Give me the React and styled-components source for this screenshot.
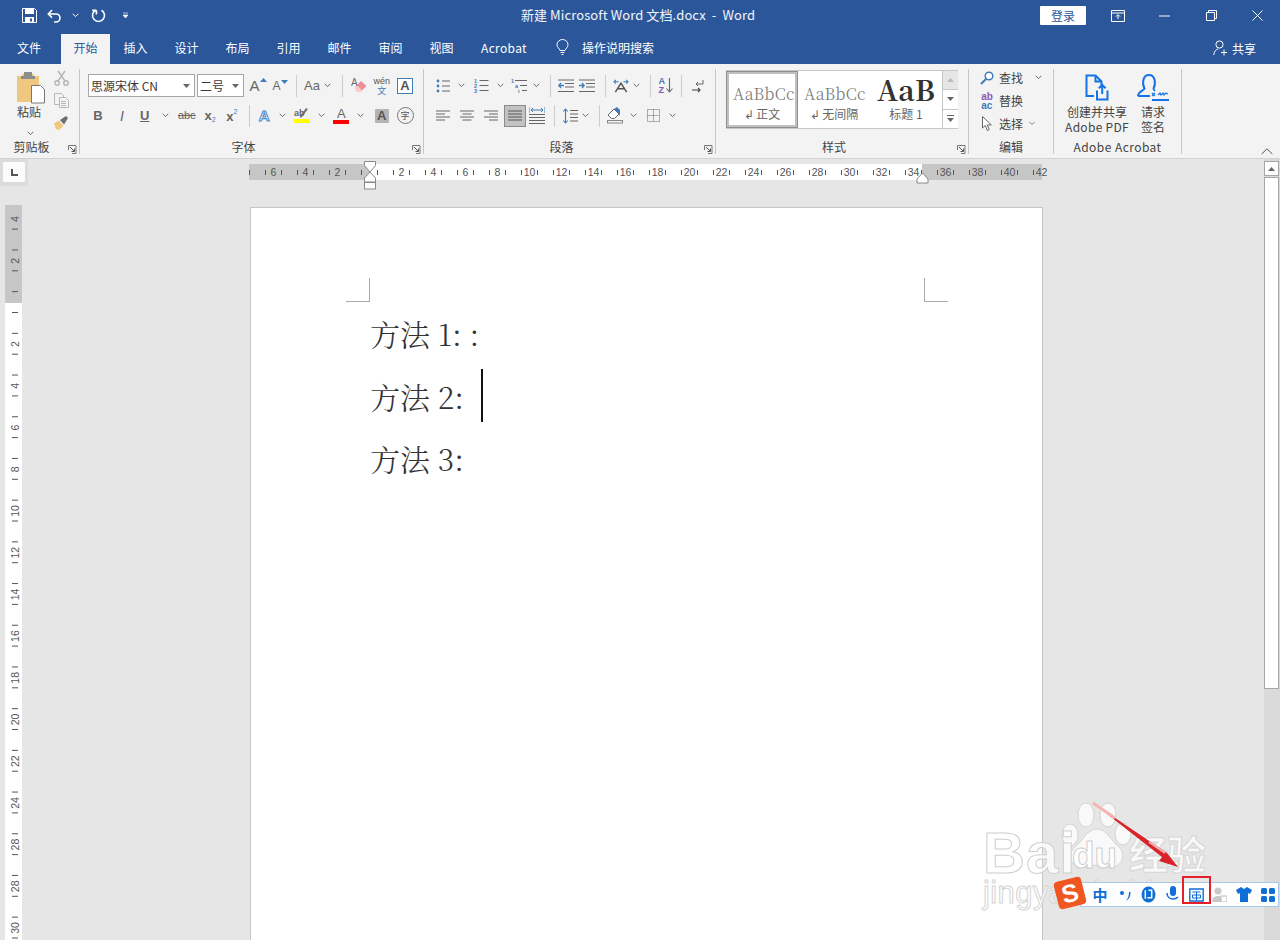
import React from 'react';
import styled, { createGlobalStyle } from 'styled-components';

const UI = '"Noto Sans CJK SC", "Noto Sans", sans-serif';
const SERIF = '"Noto Serif CJK SC", "Source Han Serif SC", "Liberation Serif", "Noto Sans CJK SC", serif';
const BLUE = '#2b579a';
const GR = '#666';
const IB = '#3f7cb8';

const Global = createGlobalStyle`
  html, body { margin: 0; padding: 0; background: #e6e6e6; overflow: hidden; }
  #root { width: 1280px; height: 940px; }
`;

const Shell = styled.div`
  position: relative; width: 1280px; height: 940px; overflow: hidden;
  display: flex; flex-direction: column;
  font: 12px ${UI}; color: #444;
`;
const TitleBar = styled.header`
  height: 34px; background: ${BLUE}; color: #fff; flex: none; box-sizing: border-box; padding-bottom: 3px;
  display: grid; grid-template-columns: 1fr auto 1fr; align-items: center;
`;
const TitleText = styled.div`font-size: 13px; white-space: pre; color: #f2f5fa; margin: 0 0 2px -4px; letter-spacing: .1px;`;
const TitleRight = styled.div`display: flex; justify-content: flex-end; align-items: center;`;
const SignIn = styled.button`
  width: 46px; height: 19px; padding: 0; border: 0; border-radius: 1px; background: #fff;
  color: ${BLUE}; font: 12px ${UI}; margin-right: 12px;
`;
const Slot = styled.span`
  display: flex; align-items: center; justify-content: center; flex: none;
  width: ${p => p.$w}px; height: 100%; margin-left: ${p => p.$ml || 0}px;
`;
const RowWrap = styled.div`display: flex; height: ${p => p.$h || 23}px; align-items: center;`;

function Row({ start, items, h }) {
  return (
    <RowWrap $h={h}>
      {items.map(([c, el], i) => {
        const next = items[i + 1];
        const prev = items[i - 1];
        const hwR = next ? (next[0] - c) / 2 : (c - prev[0]) / 2;
        const hwL = prev ? (c - prev[0]) / 2 : hwR;
        return <Slot key={i} $w={hwL + hwR} $ml={prev ? 0 : c - hwL - start}>{el}</Slot>;
      })}
    </RowWrap>
  );
}

const TabBar = styled.nav`
  height: 30px; background: ${BLUE}; display: flex; align-items: stretch; flex: none;
  padding-left: 5px; color: #fff;
`;
const Tab = styled.div`
  width: ${p => p.$w}px; margin-left: ${p => p.$ml || 0}px; box-sizing: border-box; padding-bottom: 3px;
  display: flex; align-items: center; justify-content: center; font-size: 12px;
  letter-spacing: ${p => p.$ls || 0}px;
  background: ${p => (p.$active ? '#f3f3f3' : 'transparent')};
  color: ${p => (p.$active ? BLUE : '#fff')};
`;
const SearchHint = styled.div`display: flex; align-items: center; gap: 13px; margin-left: 15px; font-size: 12px; padding-bottom: 3px;`;
const Share = styled.div`display: flex; align-items: center; gap: 4px; margin-left: auto; margin-right: 24px; font-size: 12px; padding-bottom: 2px;`;

const Ribbon = styled.section`
  height: 95px; flex: none; background: #f3f3f3; border-bottom: 1px solid #d2d2d2;
  box-sizing: border-box; display: flex; padding-top: 5px;
`;
const Group = styled.div`
  width: ${p => p.$w}px; height: 85px; box-sizing: border-box; flex: none;
  border-right: 1px solid #c6c6c6; display: flex; flex-direction: column;
`;
const GroupBody = styled.div`
  flex: 1; min-height: 0; display: flex;
  flex-direction: ${p => (p.$col ? 'column' : 'row')};
  gap: ${p => p.$gap || 0}px; padding: ${p => p.$pad || '5px 0 0 8px'};
`;
const GroupFoot = styled.div`display: flex; height: 17px; align-items: flex-end; flex: none;`;
const GroupName = styled.div`flex: 1; text-align: center; color: #444; font-size: 12px; line-height: 14px; letter-spacing: ${p => p.$ls || 0}px;`;
const Launcher = styled.span`width: 16px; display: flex; justify-content: flex-start; padding-left: 5px; box-sizing: border-box; flex: none;`;

const PasteCol = styled.div`width: 34px; margin-left: 4px; display: flex; flex-direction: column; align-items: center; padding-top: 2px;`;
const PasteIcoBox = styled.span`display: block; height: 32px; margin-left: 3px;`;
const PasteLabel = styled.div`font-size: 12px; line-height: 16px; margin-top: 0;`;
const PasteCaret = styled.span`display: block; margin: 2px 0 0 3px;`;
const SmallCol = styled.div`width: 24px; margin-left: 3px; display: flex; flex-direction: column; align-items: center; gap: 7px; padding-top: 0;`;

const FontRow = styled.div`display: flex; height: 23px; margin-bottom: 7px;`;
const SelectBox = styled.div`
  width: ${p => p.$w}px; margin-right: ${p => p.$mr || 0}px; height: 23px; box-sizing: border-box;
  background: #fff; border: 1px solid #a6a6a6; display: flex; align-items: center;
  justify-content: space-between; padding: 0 4px 0 2px; font-size: 12px; color: #3a3a3a; flex: none;
`;
const ParaStack = styled.div`display: flex; flex-direction: column; gap: 7px;`;
const Sep = styled.i`display: block; width: 1px; height: 22px; background: #cdcdcd; flex: none;`;
const Glyph = styled.span`
  font-family: "Liberation Sans", sans-serif; line-height: 1; white-space: nowrap;
  font-size: ${p => p.$s || 13}px; font-weight: ${p => p.$b ? 700 : 400}; font-style: ${p => p.$i ? 'italic' : 'normal'};
  color: ${p => p.$c || GR}; text-decoration: ${p => p.$d || 'none'};
`;
const Sub = styled.sub`font-size: 7px; color: ${IB}; font-weight: 400; vertical-align: -2px;`;
const Sup = styled.sup`font-size: 7px; color: ${IB}; font-weight: 400; vertical-align: 7px;`;
const GrowWrap = styled.span`display: flex; align-items: flex-start; gap: 0;`;
const UnderBar = styled.span`
  display: inline-flex; flex-direction: column; align-items: center; line-height: 1;
`;
const ColorLine = styled.i`display: block; width: 16px; height: 4px; background: ${p => p.$c}; margin-top: 0;`;
const BoxA = styled.span`
  width: 14px; height: 14px; border: 1px solid ${IB}; display: flex; align-items: center; justify-content: center;
  font: 700 13px "Liberation Sans", sans-serif; color: #555; background: #fff;
`;
const GreyA = styled.span`
  width: 14px; height: 14px; background: #b4b4b4; display: flex; align-items: center; justify-content: center;
  font: 700 13px "Liberation Sans", sans-serif; color: #555;
`;
const Circled = styled.span`
  width: 15px; height: 15px; border: 1px solid #777; border-radius: 50%; display: flex; align-items: center; justify-content: center;
  font-size: 9px; color: #555; line-height: 1;
`;
const WenWrap = styled.span`display: flex; flex-direction: column; align-items: center; line-height: 8px;`;
const Wen = styled.span`font: 9px "Liberation Sans", sans-serif; color: #555; line-height: 9px;`;
const WenZh = styled.span`font-size: 9px; color: ${IB}; line-height: 9px;`;
const Active = styled.span`
  width: 22px; height: 22px; background: #c2c2c2; border: 1px solid #8a8a8a; box-sizing: border-box;
  display: flex; align-items: center; justify-content: center;
`;
const SortStack = styled.span`display: flex; align-items: center; gap: 1px;`;
const SortLetters = styled.span`display: flex; flex-direction: column; font: 700 9px "Liberation Sans", sans-serif; line-height: 9px;`;
const LetterA = styled.span`color: ${IB};`;
const LetterZ = styled.span`color: #8a5ab0;`;

const Gallery = styled.div`
  margin: 1px 0 0 10px; width: 232px; height: 59px; box-sizing: border-box; display: flex;
  background: #fff; border: 1px solid #c6c6c6; border-left: 0;
`;
const StyleCard = styled.div`
  width: ${p => p.$w}px; flex: none; box-sizing: border-box; overflow: hidden;
  display: flex; flex-direction: column; align-items: center;
  padding-top: ${p => (p.$sel ? 0 : 3)}px;
  border: ${p => (p.$sel ? '3px solid #c0c0c0' : '0')};
  outline: ${p => (p.$sel ? '1px solid #8f8f8f' : '0')}; outline-offset: -1px;
`;
const StyleSample = styled.div`
  height: 31px; width: 100%; overflow: hidden; white-space: nowrap; color: ${p => (p.$big ? '#333' : '#777')};
  font-family: ${SERIF}; box-sizing: border-box; padding: ${p => (p.$big ? 0 : 4)}px 0 0 ${p => p.$pl || 4}px;
  font-size: ${p => (p.$big ? 28 : 16)}px; letter-spacing: ${p => (p.$big ? 0.5 : 0.3)}px; font-weight: ${p => (p.$big ? 700 : 300)};
  line-height: 31px;
`;
const StyleCaption = styled.div`font-size: 12px; color: #666; line-height: 18px; white-space: nowrap;`;
const GalleryScroll = styled.div`
  width: 15px; flex: none; display: flex; flex-direction: column; border-left: 1px solid #c6c6c6; margin-left: auto;
`;
const ScrollCell = styled.div`
  flex: 1; display: flex; align-items: center; justify-content: center;
  background: ${p => (p.$off ? '#e6e6e6' : '#fff')};
  border-bottom: ${p => (p.$last ? 0 : '1px solid #c6c6c6')};
`;
const EditRow = styled.div`display: flex; align-items: center; height: 23px; flex: none; margin-top: ${p => (p.$first ? -3 : 0)}px;`;
const EditIcon = styled.span`width: 30px; display: flex; justify-content: center; padding-left: 6px; box-sizing: border-box;`;
const EditText = styled.span`font-size: 12px; color: #444; width: 30px;`;
const AbStack = styled.span`display: flex; flex-direction: column; font: 700 10px "Liberation Sans", sans-serif; line-height: 9px;`;
const Ab = styled.span`color: #8a5ab0;`;
const Ac = styled.span`color: ${IB};`;
const AdobeWrap = styled.div`display: flex; padding-top: 2px;`;
const AdobeBtn = styled.div`
  width: ${p => p.$w}px; flex: none; display: flex; flex-direction: column; align-items: center;
  font-size: 12px; line-height: 15px; color: #444; text-align: center;
`;
const AdobeIco = styled.span`height: 33px; display: flex; align-items: center;`;
const AdobeLatin = styled.span`letter-spacing: .3px; white-space: nowrap;`;
const Collapse = styled.span`margin-left: auto; margin-right: 7px; align-self: flex-end;`;

const Work = styled.main`flex: 1; min-height: 0; display: flex; background: #e6e6e6; overflow: hidden;`;
const LeftCol = styled.div`width: 28px; flex: none; display: flex; flex-direction: column;`;
const Corner = styled.div`
  width: 28px; height: 27px; box-sizing: border-box; background: #dcdcdc; padding: 3px 3px 4px 3px;
`;
const CornerInner = styled.div`width: 22px; height: 20px; background: #fbfbfb; display: flex; align-items: center; justify-content: center;`;
const VRuler = styled.svg`display: block; margin: 19px 0 0 5px; flex: none; overflow: visible;`;
const Center = styled.div`flex: 1; min-width: 0; display: flex; flex-direction: column;`;
const HRuler = styled.svg`display: block; margin: 1px 0 0 221px; flex: none; overflow: visible;`;
const Page = styled.article`
  width: 793px; flex: 1; box-sizing: border-box; background: #fff; margin: 17px 0 0 222px;
  border: 1px solid #c6c6c6; border-bottom: 0; color: #333;
`;
const CropRow = styled.div`display: flex; justify-content: space-between; margin: 70px 94px 0 95px;`;
const Crop = styled.i`
  display: block; width: 23px; height: 23px; border-bottom: 1px solid #aaa;
  ${p => (p.$right ? 'border-left: 1px solid #aaa;' : 'border-right: 1px solid #aaa;')}
`;
const Body = styled.div`padding: 0 0 0 119px;`;
const Line = styled.p`
  margin: 0; height: 62.5px; display: flex; align-items: center; white-space: pre;
  font: 30px ${SERIF}; font-weight: 300; color: #333;
`;
const Caret = styled.i`display: block; width: 1.5px; height: 53px; background: #111; margin-left: 17px;`;
const ScrollCol = styled.aside`
  width: 16px; flex: none; background: #dadada; display: flex; flex-direction: column; padding-top: 2px;
`;
const ScrollUp = styled.div`
  width: 15px; height: 15px; box-sizing: border-box; background: #fff; border: 1px solid #a6a6a6;
  display: flex; align-items: center; justify-content: center;
`;
const ScrollThumb = styled.div`width: 15px; height: 512px; margin-top: 1px; box-sizing: border-box; background: #fff; border: 1px solid #a6a6a6;`;

const Mark = styled.div`
  position: absolute; left: 983px; top: 828px; width: 230px; height: 90px; pointer-events: none;
`;
const MarkBai = styled.div`
  position: absolute; left: 0; top: -9px; font: 700 58px "Liberation Sans", sans-serif; letter-spacing: 1px;
  color: rgba(255,255,255,.75); -webkit-text-stroke: 1px #cfcfcf;
`;
const MarkDu = styled.div`
  position: absolute; left: 89px; top: 7px; font: 700 37px "Liberation Sans", sans-serif;
  color: #fff; -webkit-text-stroke: 1px #cfcfcf;
`;
const MarkZh = styled.div`
  position: absolute; left: 146px; top: -1px; font: 700 39px ${UI}; line-height: 50px;
  color: rgba(255,255,255,.8); -webkit-text-stroke: 1px #d6d6d6; letter-spacing: -1px; white-space: nowrap;
`;
const MarkUrl = styled.div`
  position: absolute; left: 0; top: 47px; font: 31px "Liberation Sans", sans-serif; white-space: nowrap;
  color: rgba(255,255,255,.75); -webkit-text-stroke: 1px #d4d4d4; letter-spacing: .4px;
`;
const Paw = styled.svg`position: absolute; left: 75px; top: -27px;`;
const ArrowSvg = styled.svg`position: absolute; left: 1085px; top: 798px; pointer-events: none;`;
const Ime = styled.div`
  position: absolute; left: 1080px; top: 882px; width: 199px; height: 25px; box-sizing: border-box;
  background: rgba(255,255,255,.96); border: 1px solid #a9c8e8;
`;
const ImeLogo = styled.div`
  position: absolute; left: 1056px; top: 879px; width: 28px; height: 28px; border-radius: 4px;
  background: #f0561f; transform: rotate(-14deg); display: flex; align-items: center; justify-content: center;
  color: #fff; font: 700 25px "Liberation Sans", sans-serif;
`;
const ImeZh = styled.span`font-size: 15px; font-weight: 700; color: #0f6fd6; line-height: 1;`;
const RedBox = styled.div`
  position: absolute; left: 1182px; top: 876px; width: 29px; height: 28px; box-sizing: border-box; border: 2px solid #e6202a;
  pointer-events: none;
`;

const Dn = ({ c = '#6a6a6a' }) => (
  <svg width="7" height="5" viewBox="0 0 7 5"><path d="M.7.8 3.5 3.6 6.3.8" fill="none" stroke={c} /></svg>
);
const Tri = ({ c = '#666' }) => (
  <svg width="7" height="4" viewBox="0 0 7 4"><path d="M0 0h7L3.5 4z" fill={c} /></svg>
);
const Save = () => (
  <svg width="15" height="15" viewBox="0 0 15 15"><path d="M.5.5h12l2 2v12H.5z" fill="none" stroke="#fff" /><rect x="3" y="1" width="9" height="5" fill="#fff" /><rect x="3" y="9" width="9" height="5" fill="#fff" /><rect x="8" y="10.5" width="2" height="3" fill={BLUE} /></svg>
);
const Undo = () => (
  <svg width="15" height="14" viewBox="0 0 15 14"><path d="M5 1 1.3 5 5 8.6M1.6 5H9a4 4 0 0 1 4 4 4 4 0 0 1-4 4H7" fill="none" stroke="#fff" strokeWidth="1.6" /></svg>
);
const Redo = () => (
  <svg width="15" height="15" viewBox="0 0 15 15"><path d="M4.5 2.3a6 6 0 1 0 6 0M5.4 2.3H1.2M5.4 2.3V6.6" fill="none" stroke="#fff" strokeWidth="1.6" /></svg>
);
const Custom = () => (
  <svg width="7" height="7" viewBox="0 0 7 7"><path d="M1 1h5M1 3h5L3.5 6z" fill="#fff" stroke="#fff" strokeWidth=".6" /></svg>
);
const DisplayOpt = () => (
  <svg width="14" height="12" viewBox="0 0 14 12"><path d="M.5.5h13v11H.5zM.5 3h13" fill="none" stroke="#fff" /><path d="M7 9V5M5 6.6 7 4.6l2 2" fill="none" stroke="#fff" /></svg>
);
const Minim = () => <svg width="11" height="2" viewBox="0 0 11 2"><path d="M0 1h11" stroke="#fff" /></svg>;
const Restore = () => (
  <svg width="11" height="11" viewBox="0 0 11 11"><path d="M.5 2.5h8v8h-8zM2.5 2.5v-2h8v8h-2" fill="none" stroke="#fff" /></svg>
);
const Close = () => <svg width="11" height="11" viewBox="0 0 11 11"><path d="m.5.5 10 10M10.5.5l-10 10" stroke="#fff" /></svg>;
const Bulb = () => (
  <svg width="13" height="17" viewBox="0 0 13 17"><path d="M4 11.5C3.5 9.5 1 8.5 1 5.7a5.5 5.2 0 0 1 11 0c0 2.8-2.5 3.8-3 5.8zM4.5 13.5h4M5.5 15.5h2" fill="none" stroke="#fff" /></svg>
);
const SharePerson = () => (
  <svg width="15" height="16" viewBox="0 0 15 16"><circle cx="6.5" cy="4.5" r="3.6" fill="none" stroke="#fff" /><path d="M.7 15c.3-3.500 2.300-5.500 4.600-6.200M11 9.500v6M8 12.500h6" fill="none" stroke="#fff" /></svg>
);
const PasteIco = () => (
  <svg width="30" height="32" viewBox="0 0 30 32"><path d="M1 4h5V2h12v2h5v26H1z" fill="#efc77f" /><rect x="8" y="0" width="8" height="5" fill="#8d8d8d" /><rect x="5" y="4" width="14" height="3" fill="#8d8d8d" /><path d="M15.5 13.5h9l4 4v13.5h-13z" fill="#fff" stroke="#777" /></svg>
);
const Scissors = () => (
  <svg width="15" height="16" viewBox="0 0 15 16"><g fill="none" stroke="#b4b4b4" strokeWidth="1.4"><circle cx="3" cy="13" r="2.2" /><circle cx="12" cy="13" r="2.2" /><path d="M4 11 11 1M11 11 4 1" /></g></svg>
);
const Copy = () => (
  <svg width="15" height="15" viewBox="0 0 15 15"><g fill="#f3f3f3" stroke="#b8b8b8"><path d="M.5.5h7l2 2v9h-9z" /><path d="M5.5 4.5h6l3 3v7h-9z" /><path d="M7 8.5h5M7 10.5h5M7 12.5h5" /></g></svg>
);
const Brush = () => (
  <svg width="16" height="15" viewBox="0 0 16 15"><path d="m1 8.5 5-3 4.5 5.5-4 3.5H3z" fill="#efc77f" /><path d="m7 5 6-4 2 2-4 6.5z" fill="#6e6e6e" /></svg>
);
const LaunchIco = () => (
  <svg width="9" height="9" viewBox="0 0 9 9"><path d="M.5 5V.5H8v8H4" fill="none" stroke="#777" /><path d="M2 2l4.2 4.2M6.5 3.5v3h-3" fill="none" stroke="#555" /></svg>
);
const Eraser = () => (
  <svg width="17" height="17" viewBox="0 0 17 17"><path d="m4 10 6-6 5.5 5-6 6H6z" fill="#ef8f9b" /><path d="M4 10 6 15h3.5l1.5-1.5L6 8z" fill="#f8cdd2" /><text x="0" y="9" fontFamily="Liberation Sans" fontSize="10" fill="#6a6a6a">A</text></svg>
);
const Pen = () => (
  <svg width="16" height="11" viewBox="0 0 16 11"><path d="m6 10 2-1 6-8-2-1-6 8z" fill="#777" /><text x="0" y="8" fontFamily="Liberation Sans" fontSize="9" fontWeight="700" fill="#666">ab</text></svg>
);
const OutlineA = () => (
  <svg width="18" height="18" viewBox="0 0 18 18"><text x="2" y="15" fontFamily="Liberation Sans" fontSize="17" fontWeight="700" fill="#fff" stroke="#4c8ccb" strokeWidth="1.2">A</text></svg>
);
const Dots = ({ y, c = IB }) => <circle cx="2" cy={y} r="1.4" fill={c} />;
const Bullets = () => (
  <svg width="14" height="14" viewBox="0 0 14 14"><Dots y={2} /><Dots y={7} /><Dots y={12} /><path d="M6 2h8M6 7h8M6 12h8" stroke="#666" /></svg>
);
const Numbered = () => (
  <svg width="15" height="15" viewBox="0 0 15 15"><g fontFamily="Liberation Sans" fontSize="5.5" fontWeight="700" fill={IB}><text x="0" y="4.5">1</text><text x="0" y="9.5">2</text><text x="0" y="14.5">3</text></g><path d="M5.5 2.5h9M5.5 7.5h9M5.5 12.5h9" stroke="#666" /></svg>
);
const Multi = () => (
  <svg width="16" height="15" viewBox="0 0 16 15"><g fontFamily="Liberation Sans" fontSize="5.5" fontWeight="700" fill={IB}><text x="0" y="4.5">1</text><text x="4" y="9.5">a</text><text x="7" y="14.5">i</text></g><path d="M4 2.5h12M9 7.5h7M11 12.5h5" stroke="#666" /></svg>
);
const IndentIco = ({ flip }) => (
  <svg width="16" height="14" viewBox="0 0 16 14"><path d="M0 1h16M7 4.5h9M7 8h9M0 12.5h16" stroke="#666" /><path d={flip ? 'M6 6.5H1M3 4 .8 6.5 3 9' : 'M0 6.5h5M3 4l2.2 2.5L3 9'} fill="none" stroke={IB} strokeWidth="1.3" /></svg>
);
const TextDir = () => (
  <svg width="17" height="14" viewBox="0 0 17 14"><path d="M2.5 13.5 8.5 4l6 9.500M5 10h7" fill="none" stroke="#555" strokeWidth="1.6" /><path d="M6 2.500H1M3 .5 1 2.500l2 2M11 2.500h5M14 .5l2 2-2 2" fill="none" stroke={IB} strokeWidth="1.100" /></svg>
);
const SortArrow = () => (
  <svg width="7" height="15" viewBox="0 0 7 15"><path d="M3.500 0v14M.5 10.500l3 3.500 3-3.500" fill="none" stroke="#666" strokeWidth="1.100" /></svg>
);
const Pilcrow = () => (
  <svg width="12" height="14" viewBox="0 0 12 14"><path d="M11 1v4H4M6 3 4 5l2 2" fill="none" stroke="#666" /><path d="M0 11h8M6 9l2 2-2 2" fill="none" stroke="#444" strokeWidth="1.100" /></svg>
);
const Align = ({ a, c = '#666' }) => {
  const mk = (w, y) => {
    const x = a === 'l' ? 0 : a === 'r' ? 14 - w : (14 - w) / 2;
    return <path key={y} d={`M${x} ${y}h${w}`} stroke={c} />;
  };
  return <svg width="14" height="11" viewBox="0 0 14 11">{mk(14, 1)}{mk(9, 4)}{mk(14, 7)}{mk(9, 10)}</svg>;
};
const Justify = () => (
  <svg width="14" height="11" viewBox="0 0 14 11"><path d="M0 1h14M0 4h14M0 7h14M0 10h14" stroke="#555" /></svg>
);
const Distrib = () => (
  <svg width="16" height="17" viewBox="0 0 16 17"><path d="M0 0v6M16 0v6" stroke={IB} /><path d="M2 3h12M4 1 2 3l2 2M12 1l2 2-2 2" fill="none" stroke={IB} /><path d="M0 7.500h16M0 10.500h16M0 13.500h16M0 16.500h16" stroke="#666" /></svg>
);
const LineSp = () => (
  <svg width="15" height="16" viewBox="0 0 15 16"><path d="M2.500 1v14M.3 3.500 2.500 1l2.200 2.500M.3 12.500l2.200 2.500 2.200-2.500" fill="none" stroke={IB} strokeWidth="1.100" /><path d="M7 2.500h8M7 6h8M7 9.500h8M7 13h8" stroke="#666" /></svg>
);
const Bucket = () => (
  <svg width="17" height="17" viewBox="0 0 17 17"><path d="m1 8 6-6 5 5-4.500 4.500h-3z" fill="#fff" stroke="#666" /><path d="m7 2 5 5 1 2V3l-3-3z" fill={IB} /><rect x=".5" y="13.500" width="15" height="2.500" fill="#f3f3f3" stroke="#888" /></svg>
);
const Borders = () => (
  <svg width="13" height="13" viewBox="0 0 13 13"><path d="M.5.5h12v12H.5zM.5 6.500h12M6.500.5v12" fill="none" stroke="#666" strokeDasharray="1 1" /></svg>
);
const ScrollTri = ({ up, c = '#666' }) => (
  <svg width="7" height="4" viewBox="0 0 7 4"><path d={up ? 'M0 4h7L3.500 0z' : 'M0 0h7L3.500 4z'} fill={c} /></svg>
);
const MoreTri = () => (
  <svg width="7" height="7" viewBox="0 0 7 7"><path d="M0 .5h7" stroke="#666" /><path d="M0 3h7L3.500 7z" fill="#666" /></svg>
);
const Mag = () => (
  <svg width="14" height="14" viewBox="0 0 14 14"><circle cx="9" cy="5" r="3.800" fill="#fff" stroke={IB} strokeWidth="1.500" /><path d="M6 8 1 13" stroke={IB} strokeWidth="2" /></svg>
);
const Cursor = () => (
  <svg width="10" height="15" viewBox="0 0 10 15"><path d="M.5.5v11.500l2.800-2.500 2 5 2-.800-2-4.800h4z" fill="#fff" stroke="#666" /></svg>
);
const PdfShare = () => (
  <svg width="24" height="28" viewBox="0 0 24 28"><path d="M9 22H1.500V1.500h9l6 6v4" fill="none" stroke="#1473e6" strokeWidth="2" /><path d="M10.500 1.500v6h6" fill="none" stroke="#1473e6" strokeWidth="2" /><path d="M12 16.500v9h10.500v-9M17.200 20V11M13.800 14.300l3.400-3.400 3.400 3.400" fill="none" stroke="#1473e6" strokeWidth="2" /></svg>
);
const Sign = () => (
  <svg width="32" height="28" viewBox="0 0 32 28"><path d="M1 22c0-4 5-5 6.500-7.500C5 10 5.500 1 12 1s7 9 4.500 13.500c.4 1 .8 2 1.500 2.500M1 22h12" fill="none" stroke="#1473e6" strokeWidth="2" /><path d="M15 19l3 3M18 19l-3 3M21 21l2-2 1 2 2-2 1 2 2-2 2 1" fill="none" stroke="#1473e6" strokeWidth="1.300" /><path d="M15 26h17" stroke="#1473e6" strokeWidth="2" /></svg>
);
const ChevUp = () => (
  <svg width="12" height="7" viewBox="0 0 12 7"><path d="M.7 6 6 .8 11.300 6" fill="none" stroke="#555" /></svg>
);
const TabStop = () => (
  <svg width="7" height="7" viewBox="0 0 7 7"><path d="M1 0v6h6" fill="none" stroke="#555" strokeWidth="2" /></svg>
);
const ImeDot = () => (
  <svg width="12" height="14" viewBox="0 0 12 14"><circle cx="3" cy="5" r="2" fill="#0f6fd6" /><path d="M10 4c0 4-1 6-3 9 3-2 4.500-4 4.500-9z" fill="#0f6fd6" /></svg>
);
const ImeFace = () => (
  <svg width="15" height="17" viewBox="0 0 14 16"><path d="M7 .5a6.500 7.500 0 1 0 .01 0z" fill="#0f6fd6" /><path d="M7 4h3v7H6M4 4v8" stroke="#fff" strokeWidth="1.400" fill="none" /></svg>
);
const ImeMic = () => (
  <svg width="14" height="17" viewBox="0 0 14 17"><rect x="4" y="0" width="6" height="10" rx="3" fill="#0f6fd6" /><path d="M1 7c0 4 3 6 6 6 3 0 4-1 5-2" fill="none" stroke="#0f6fd6" strokeWidth="1.500" /></svg>
);
const ImeKey = () => (
  <svg width="15" height="14" viewBox="0 0 15 14"><path d="M.8 1h13.400v12H.8z" fill="none" stroke="#0f6fd6" strokeWidth="1.400" /><path d="M3.500 4h8M7.500 4v8M3.500 7h8v3h-8z" fill="none" stroke="#0f6fd6" /></svg>
);
const ImeUser = () => (
  <svg width="15" height="15" viewBox="0 0 15 15"><circle cx="6" cy="4" r="3.500" fill="#c9c9c9" /><path d="M0 15c0-4 2.500-6 6-6s6 2 6 6z" fill="#c9c9c9" /><rect x="9" y="9" width="6" height="6" fill="#fff" stroke="#bbb" /></svg>
);
const ImeShirt = () => (
  <svg width="16" height="15" viewBox="0 0 16 15"><path d="M5 0 0 3l2 4 2-1v9h8V6l2 1 2-4-5-3-3 2z" fill="#0f6fd6" /></svg>
);
const ImeGrid = () => (
  <svg width="14" height="14" viewBox="0 0 14 14"><g fill="#0f6fd6"><rect width="6" height="6" rx="1.500" /><rect x="8" width="6" height="6" rx="1.500" /><rect y="8" width="6" height="6" rx="1.500" /><rect x="8" y="8" width="6" height="6" rx="1.500" /></g></svg>
);

const hTicks = [];
for (let x = 120 - 8 - 16 * 7; x <= 793; x += 16) hTicks.push(x);
const hLabels = [];
for (let k = -3; k <= 21; k++) if (k !== 0) hLabels.push(k);

const vLabels = [[-2, '4'], [-1, '2'], [1, '2'], [2, '4'], [3, '6'], [4, '8'], [5, '10'], [6, '12'], [7, '14'], [8, '16'], [9, '18'], [10, '20'], [11, '22'], [12, '24'], [13, '28'], [14, '28'], [15, '30']];
const vTicks = [];
for (let i = -4; i < 32; i++) vTicks.push(107 + 20.85 * i);

const HorizontalRuler = () => (
  <HRuler width="793" height="30" viewBox="0 0 793 30">
    <rect x="0" y="4" width="793" height="16" fill="#fff" />
    <rect x="0" y="4" width="120" height="16" fill="#c6c6c6" />
    <rect x="673" y="4" width="120" height="16" fill="#c6c6c6" />
    {hTicks.map(x => <rect key={x} x={x} y="10" width="1" height="5" fill="#555" />)}
    {hLabels.map(k => (
      <text key={k} x={120.5 + 32 * k} y="16" textAnchor="middle" fontFamily="Liberation Sans" fontSize="10.500" fill="#555">{Math.abs(2 * k)}</text>
    ))}
    <g fill="#fff" stroke="#8a8a8a">
      <path d="M115.500 1.500h11v4l-5.500 6.500-5.500-6.500z" />
      <path d="M121 12l5.500 6v4h-11v-4z" />
      <rect x="115.500" y="22.500" width="11" height="6.500" />
      <path d="M673.500 13l5.500 6v4h-11v-4z" />
    </g>
  </HRuler>
);
const VerticalRuler = () => (
  <VRuler width="17" height="735" viewBox="0 0 17 735">
    <rect width="17" height="735" fill="#fff" />
    <rect width="17" height="98" fill="#c6c6c6" />
    {vTicks.map(y => <rect key={y} x="7" y={y} width="6" height="1" fill="#555" />)}
    {vLabels.map(([k, t]) => {
      const y = 97.500 + 41.700 * k;
      return <text key={k} x="0" y="0" transform={`translate(14 ${y}) rotate(-90)`} textAnchor="middle" fontFamily="Liberation Sans" fontSize="10.500" fill="#555">{t}</text>;
    })}
  </VRuler>
);

const font2 = [
  [98, <Glyph $b>B</Glyph>],
  [122, <Glyph $i $s={14}>I</Glyph>],
  [146, <Glyph $b $d="underline">U</Glyph>],
  [165, <Dn />],
  [186, <Glyph $s={11} $d="line-through">abc</Glyph>],
  [210, <Glyph $b>x<Sub>2</Sub></Glyph>],
  [234, <Glyph $b>x<Sup>2</Sup></Glyph>],
  [249, <Sep />],
  [265, <OutlineA />],
  [281, <Dn />],
  [303, <UnderBar><Pen /><ColorLine $c="#ffff00" /></UnderBar>],
  [321, <Dn />],
  [342, <UnderBar><Glyph $s={13}>A</Glyph><ColorLine $c="#ff0000" /></UnderBar>],
  [360, <Dn />],
  [381, <GreyA>A</GreyA>],
  [405, <Circled>字</Circled>],
];
const font1 = [
  [258, <GrowWrap><Glyph $s={15}>A</Glyph><ScrollTri up c={IB} /></GrowWrap>],
  [283, <GrowWrap><Glyph $s={12}>A</Glyph><ScrollTri c={IB} /></GrowWrap>],
  [296, <Sep />],
  [312, <Glyph $s={13}>Aa</Glyph>],
  [328, <Dn />],
  [341, <Sep />],
  [358, <Eraser />],
  [382, <WenWrap><Wen>wén</Wen><WenZh>文</WenZh></WenWrap>],
  [405, <BoxA>A</BoxA>],
];
const para1 = [
  [443, <Bullets />], [461, <Dn />], [482, <Numbered />], [500, <Dn />], [520, <Multi />], [537, <Dn />],
  [550, <Sep />], [563, <IndentIco flip />], [589, <IndentIco />], [605, <Sep />],
  [621, <TextDir />], [637, <Dn />], [650, <Sep />],
  [666, <SortStack><SortLetters><LetterA>A</LetterA><LetterZ>Z</LetterZ></SortLetters><SortArrow /></SortStack>],
  [681, <Sep />], [698, <Pilcrow />],
];
const para2 = [
  [443, <Align a="l" />], [467, <Align a="c" />], [491, <Align a="r" />], [515, <Active><Justify /></Active>],
  [539, <Distrib />], [554, <Sep />], [570, <LineSp />], [586, <Dn />], [599, <Sep />],
  [615, <Bucket />], [633, <Dn />], [654, <Borders />], [672, <Dn />],
];
const imeItems = [
  [1100, <ImeZh>中</ImeZh>], [1125, <ImeDot />], [1149, <ImeFace />], [1172, <ImeMic />], [1197, <ImeKey />],
  [1219, <ImeUser />], [1244, <ImeShirt />], [1268, <ImeGrid />],
];
const tabs = ['插入', '设计', '布局', '引用', '邮件', '审阅', '视图'];

export default function App() {
  return (
    <Shell>
      <Global />
      <TitleBar>
        <Row start={0} h={31} items={[[29, <Save />], [57, <Undo />], [75, <Dn c="#fff" />], [96, <Redo />], [125, <Custom />]]} />
        <TitleText>新建 Microsoft Word 文档.docx  -  Word</TitleText>
        <TitleRight>
          <SignIn>登录</SignIn>
          <Row start={1098} h={31} items={[[1118, <DisplayOpt />], [1165, <Minim />], [1211, <Restore />], [1257, <Close />]]} />
        </TitleRight>
      </TitleBar>
      <TabBar>
        <Tab $w={48}>文件</Tab>
        <Tab $w={49} $ml={8} $active>开始</Tab>
        {tabs.map(t => <Tab key={t} $w={51}>{t}</Tab>)}
        <Tab $w={74} $ls={0.35}>Acrobat</Tab>
        <SearchHint><Bulb />操作说明搜索</SearchHint>
        <Share><SharePerson />共享</Share>
      </TabBar>
      <Ribbon>
        <Group $w={80}>
          <GroupBody $pad="1px 0 0 8px">
            <PasteCol>
              <PasteIcoBox><PasteIco /></PasteIcoBox>
              <PasteLabel>粘贴</PasteLabel>
              <PasteCaret><Dn /></PasteCaret>
            </PasteCol>
            <SmallCol><Scissors /><Copy /><Brush /></SmallCol>
          </GroupBody>
          <GroupFoot><GroupName>剪贴板</GroupName><Launcher><LaunchIco /></Launcher></GroupFoot>
        </Group>
        <Group $w={344}>
          <GroupBody $col>
            <FontRow>
              <SelectBox $w={107} $mr={2}>思源宋体 CN<Tri /></SelectBox>
              <SelectBox $w={47}>二号<Tri /></SelectBox>
              <Row start={244} items={font1} />
            </FontRow>
            <Row start={88} items={font2} />
          </GroupBody>
          <GroupFoot><GroupName>字体</GroupName><Launcher><LaunchIco /></Launcher></GroupFoot>
        </Group>
        <Group $w={292}>
          <GroupBody>
            <ParaStack>
              <Row start={432} items={para1} />
              <Row start={432} items={para2} />
            </ParaStack>
          </GroupBody>
          <GroupFoot><GroupName>段落</GroupName><Launcher><LaunchIco /></Launcher></GroupFoot>
        </Group>
        <Group $w={253}>
          <GroupBody $pad="0">
            <Gallery>
              <StyleCard $w={72} $sel>
                <StyleSample>AaBbCc</StyleSample>
                <StyleCaption>↲ 正文</StyleCaption>
              </StyleCard>
              <StyleCard $w={72}>
                <StyleSample $pl={6}>AaBbCc</StyleSample>
                <StyleCaption>↲ 无间隔</StyleCaption>
              </StyleCard>
              <StyleCard $w={72}>
                <StyleSample $big $pl={7}>AaB</StyleSample>
                <StyleCaption>标题 1</StyleCaption>
              </StyleCard>
              <GalleryScroll>
                <ScrollCell $off><ScrollTri up c="#bbb" /></ScrollCell>
                <ScrollCell><ScrollTri /></ScrollCell>
                <ScrollCell $last><MoreTri /></ScrollCell>
              </GalleryScroll>
            </Gallery>
          </GroupBody>
          <GroupFoot><GroupName>样式</GroupName><Launcher><LaunchIco /></Launcher></GroupFoot>
        </Group>
        <Group $w={85}>
          <GroupBody $col $pad="0">
            <EditRow $first><EditIcon><Mag /></EditIcon><EditText>查找</EditText><Slot $w={18}><Dn /></Slot></EditRow>
            <EditRow><EditIcon><AbStack><Ab>ab</Ab><Ac>ac</Ac></AbStack></EditIcon><EditText>替换</EditText></EditRow>
            <EditRow><EditIcon><Cursor /></EditIcon><EditText>选择</EditText><Slot $w={6}><Dn /></Slot></EditRow>
          </GroupBody>
          <GroupFoot><GroupName>编辑</GroupName></GroupFoot>
        </Group>
        <Group $w={128}>
          <GroupBody $pad="0">
            <AdobeWrap>
              <AdobeBtn $w={86}><AdobeIco><PdfShare /></AdobeIco>创建并共享<br /><AdobeLatin>Adobe PDF</AdobeLatin></AdobeBtn>
              <AdobeBtn $w={26}><AdobeIco><Sign /></AdobeIco>请求<br />签名</AdobeBtn>
            </AdobeWrap>
          </GroupBody>
          <GroupFoot><GroupName $ls={0.45}>Adobe Acrobat</GroupName></GroupFoot>
        </Group>
        <Collapse><ChevUp /></Collapse>
      </Ribbon>
      <Work>
        <LeftCol>
          <Corner><CornerInner><TabStop /></CornerInner></Corner>
          <VerticalRuler />
        </LeftCol>
        <Center>
          <HorizontalRuler />
          <Page>
            <CropRow><Crop /><Crop $right /></CropRow>
            <Body>
              <Line>方法 1: :</Line>
              <Line>方法 2:<Caret /></Line>
              <Line>方法 3:</Line>
            </Body>
          </Page>
        </Center>
        <ScrollCol>
          <ScrollUp><ScrollTri up /></ScrollUp>
          <ScrollThumb />
        </ScrollCol>
      </Work>
      <Mark>
        <Paw width="80" height="80" viewBox="0 0 80 80">
          <g fill="rgba(255,255,255,.75)" stroke="#d4d4d4">
            <ellipse cx="28" cy="14" rx="8" ry="12" />
            <ellipse cx="50" cy="14" rx="8" ry="12" />
            <ellipse cx="12" cy="34" rx="8" ry="11" />
            <ellipse cx="65" cy="33" rx="8" ry="11" />
            <path d="M39 28c10 0 14 12 22 18 8 8 2 22-10 20-5-1-8-2-12-2s-8 1-13 2C14 68 8 54 17 46c8-6 12-18 22-18z" />
          </g>
        </Paw>
        <MarkBai>Bai</MarkBai>
        <MarkDu>du</MarkDu>
        <MarkZh>经验</MarkZh>
        <MarkUrl>jingyan.baidu.com</MarkUrl>
      </Mark>
      <ArrowSvg width="100" height="75" viewBox="0 0 100 75">
        <path d="M8 5 82 55 93 69 74 63 77 59z" fill="#d9232b" />
        <path d="M8 5 30 20" stroke="#f5b5b5" strokeWidth="3" />
        <path d="M64 44 80 55" stroke="#f5b5b5" strokeWidth="2" />
      </ArrowSvg>
      <Ime><Row start={1081} h={23} items={imeItems} /></Ime>
      <ImeLogo>S</ImeLogo>
      <RedBox />
    </Shell>
  );
}
